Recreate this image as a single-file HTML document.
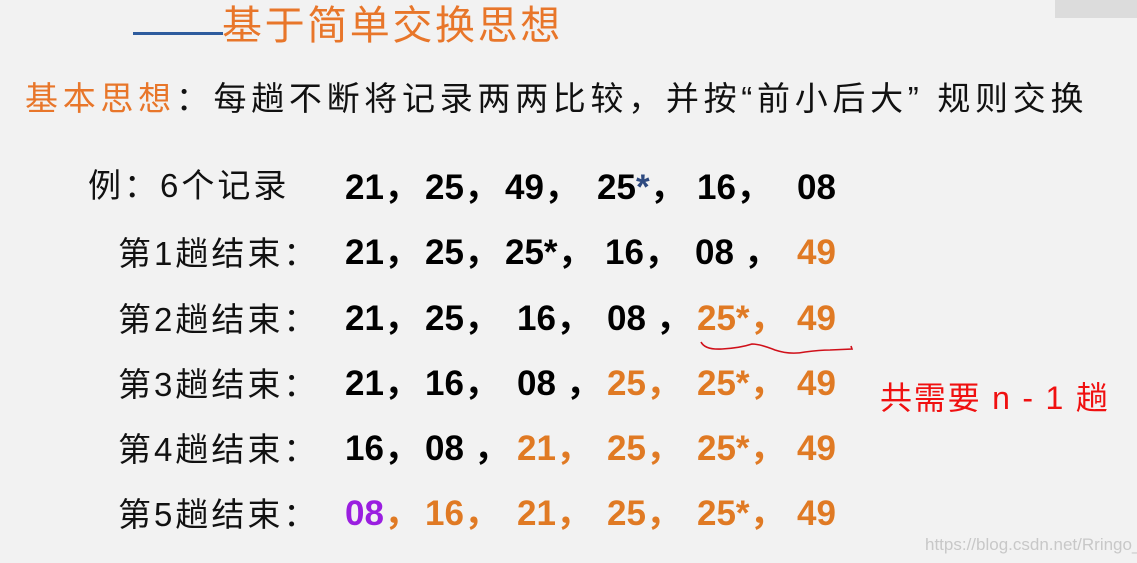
<!DOCTYPE html>
<html><head><meta charset="utf-8"><style>
body{margin:0;width:1137px;height:563px;background:#f2f2f2;position:relative;overflow:hidden;font-family:"Liberation Sans","Noto Sans CJK SC",sans-serif}
.a{position:absolute;white-space:nowrap;line-height:1}
.n{font-weight:bold;font-size:35px;color:#000}
.o{color:#e07a24}
.l{font-size:33px;color:#111;letter-spacing:3px}
</style></head><body>
<div class="a" style="left:1055px;top:0;width:82px;height:18px;background:#dcdcdc"></div>
<div class="a" style="left:133px;top:32px;width:90px;height:3px;background:#2e5c9e"></div>
<div class="a" style="left:222px;top:6px;font-size:40px;letter-spacing:2.6px;color:#e8762a">基于简单交换思想</div>
<div class="a" style="left:25px;top:82px;font-size:33px;letter-spacing:4.7px;color:#111"><span style="color:#e8762a">基本思想</span>：每趟不断将记录两两比较，并按“前小后大” 规则交换</div>

<div class="a l" style="left:88px;top:169px">例：6个记录</div>
<div class="a l" style="left:118px;top:237px">第1趟结束：</div>
<div class="a l" style="left:118px;top:303px">第2趟结束：</div>
<div class="a l" style="left:118px;top:368px">第3趟结束：</div>
<div class="a l" style="left:118px;top:433px">第4趟结束：</div>
<div class="a l" style="left:118px;top:498px">第5趟结束：</div>

<div class="a n" style="left:345px;top:170px">21，</div><div class="a n" style="left:425px;top:170px">25，</div><div class="a n" style="left:505px;top:170px">49，</div><div class="a n" style="left:597px;top:170px">25<span style="color:#2e4a80">*</span>，</div><div class="a n" style="left:697px;top:170px">16，</div><div class="a n" style="left:797px;top:170px">08</div>

<div class="a n" style="left:345px;top:235px">21，</div><div class="a n" style="left:425px;top:235px">25，</div><div class="a n" style="left:505px;top:235px">25*，</div><div class="a n" style="left:605px;top:235px">16，</div><div class="a n" style="left:695px;top:235px">08 ，</div><div class="a n o" style="left:797px;top:235px">49</div>

<div class="a n" style="left:345px;top:301px">21，</div><div class="a n" style="left:425px;top:301px">25，</div><div class="a n" style="left:517px;top:301px">16，</div><div class="a n" style="left:607px;top:301px">08 ，</div><div class="a n o" style="left:697px;top:301px">25*，</div><div class="a n o" style="left:797px;top:301px">49</div>

<div class="a n" style="left:345px;top:366px">21，</div><div class="a n" style="left:425px;top:366px">16，</div><div class="a n" style="left:517px;top:366px">08 ，</div><div class="a n o" style="left:607px;top:366px">25，</div><div class="a n o" style="left:697px;top:366px">25*，</div><div class="a n o" style="left:797px;top:366px">49</div>

<div class="a n" style="left:345px;top:431px">16，</div><div class="a n" style="left:425px;top:431px">08 ，</div><div class="a n o" style="left:517px;top:431px">21，</div><div class="a n o" style="left:607px;top:431px">25，</div><div class="a n o" style="left:697px;top:431px">25*，</div><div class="a n o" style="left:797px;top:431px">49</div>

<div class="a n" style="left:345px;top:496px"><span style="color:#9a1ee0">08</span><span class="o">，</span></div><div class="a n o" style="left:425px;top:496px">16，</div><div class="a n o" style="left:517px;top:496px">21，</div><div class="a n o" style="left:607px;top:496px">25，</div><div class="a n o" style="left:697px;top:496px">25*，</div><div class="a n o" style="left:797px;top:496px">49</div>

<svg class="a" style="left:0;top:0" width="1137" height="563"><path d="M701 342 Q705 350 722 349 Q740 348 752 344 Q760 344 775 350 Q790 355 805 352 Q820 350 830 350 L852 349 L851 346" stroke="#d0101a" stroke-width="1.6" fill="none"/></svg>

<div class="a" style="left:880px;top:382px;font-size:32px;letter-spacing:1.8px;color:#f01010">共需要 n - 1 趟</div>
<div class="a" style="left:925px;top:536px;font-size:17px;color:#c8c8c8">https://blog.csdn.net/Rringo_</div>
</body></html>
